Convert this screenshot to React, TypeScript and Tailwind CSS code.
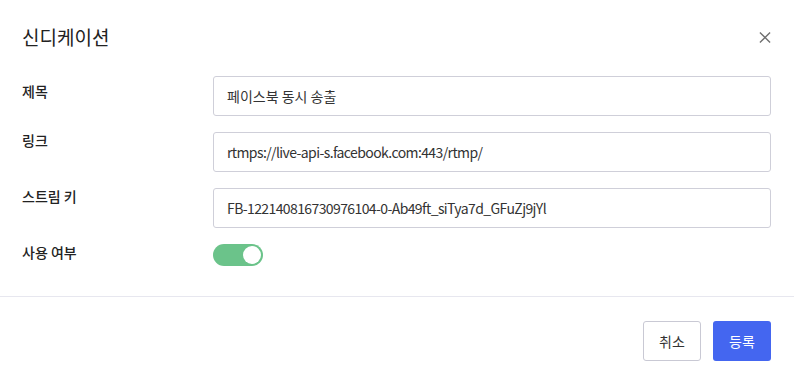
import { useState } from "react";

const font = { fontFamily: '"Noto Sans CJK KR", "Noto Sans", sans-serif' };

function Field({ label, value, first, tight }: { label: string; value: string; first?: boolean; tight?: boolean }) {
  return (
    <>
      <div className={`text-[14px] leading-[16px] font-medium text-[#222] ${first ? "pt-[7px]" : "pt-0"}`}>{label}</div>
      <input
        readOnly
        value={value}
        className={`h-[40px] w-full rounded-[3px] border border-[#cfcfd9] px-[13px] text-[14px] text-[#333] outline-none ${tight ? "tracking-[-0.6px]" : ""}`}
        style={font}
      />
    </>
  );
}

export default function App() {
  const [on, setOn] = useState(true);

  return (
    <div className="w-[794px] h-[381px] bg-white flex flex-col" style={font}>
      <div className="flex items-center justify-between pl-[22px] pr-[23px] pt-[24px]">
        <h1 className="text-[19px] leading-[26px] font-normal text-[#222]">신디케이션</h1>
        <button className="w-[12px] h-[12px] flex items-center justify-center">
          <svg width="13" height="13" viewBox="0 0 13 13" fill="none" stroke="#707070" strokeWidth="1.5">
            <path d="M1 1L12 12M12 1L1 12" />
          </svg>
        </button>
      </div>

      <div className="grid grid-cols-[191px_1fr] gap-y-[16px] pl-[22px] pr-[23px] mt-[26px]">
        <Field first label="제목" value="페이스북 동시 송출" />
        <Field tight label="링크" value="rtmps://live-api-s.facebook.com:443/rtmp/" />
        <Field tight label="스트림 키" value="FB-122140816730976104-0-Ab49ft_siTya7d_GFuZj9jYl" />
        <div className="text-[14px] leading-[16px] font-medium text-[#222]">사용 여부</div>
        <div>
          <button
            onClick={() => setOn(!on)}
            className={`w-[50px] h-[22px] rounded-full flex items-center px-[2px] ${on ? "bg-[#6bc38a] justify-end" : "bg-[#cfcfd9] justify-start"}`}
          >
            <span className="w-[18px] h-[18px] rounded-full bg-white block" />
          </button>
        </div>
      </div>

      <div className="mt-[30px] h-px bg-[#e7e7ef]" />

      <div className="flex justify-end gap-[12px] pr-[23px] pt-[24px]">
        <button className="w-[58px] h-[40px] rounded-[3px] border border-[#c9c9d4] bg-white text-[14px] text-[#333]">취소</button>
        <button className="w-[58px] h-[40px] rounded-[3px] bg-[#4466f0] text-[14px] text-white">등록</button>
      </div>
    </div>
  );
}
